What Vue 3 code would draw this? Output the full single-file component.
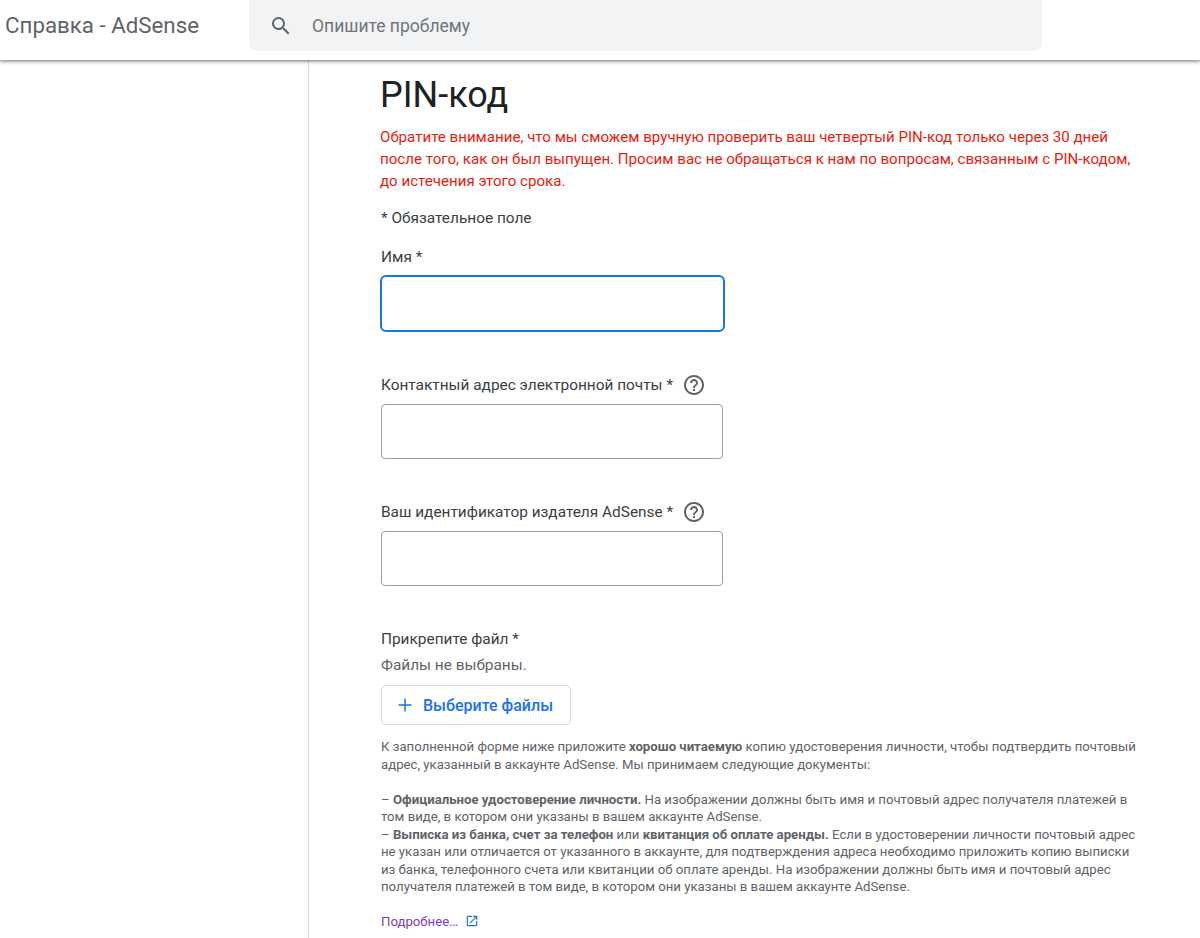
<script setup>
const fields = [
  { id: 'name', label: 'Имя *', help: false, focus: true },
  { id: 'email', label: 'Контактный адрес электронной почты *', help: true, focus: false },
  { id: 'pub', label: 'Ваш идентификатор издателя AdSense *', help: true, focus: false },
]
</script>

<template>
  <div class="page">
    <header class="topbar">
      <div class="brand">Справка - AdSense</div>
      <div class="search">
        <svg class="search-icon" viewBox="0 0 24 24" width="24" height="24"><path fill="#5f6368" d="M15.5 14h-.79l-.28-.27A6.471 6.471 0 0 0 16 9.5 6.5 6.5 0 1 0 9.5 16c1.61 0 3.09-.59 4.23-1.57l.27.28v.79l5 4.99L20.49 19l-4.99-5zm-6 0C7.01 14 5 11.99 5 9.5S7.01 5 9.5 5 14 7.01 14 9.5 11.99 14 9.5 14z"/></svg>
        <span class="search-text">Опишите проблему</span>
      </div>
    </header>
    <div class="body">
      <aside class="side"></aside>
      <main class="main">
        <h1 class="title">PIN-код</h1>
        <p class="warn">Обратите внимание, что мы сможем вручную проверить ваш четвертый PIN-код только через 30 дней после того, как он был выпущен. Просим вас не обращаться к нам по вопросам, связанным с PIN-кодом, до истечения этого срока.</p>
        <div class="required">* Обязательное поле</div>
        <div v-for="f in fields" :key="f.id" class="field" :class="{ 'field-focus': f.focus }">
          <div class="label">
            <span>{{ f.label }}</span>
            <svg v-if="f.help" class="help" viewBox="0 0 24 24" width="24" height="24"><path fill="#5f6368" d="M11 18h2v-2h-2v2zm1-16C6.48 2 2 6.48 2 12s4.48 10 10 10 10-4.48 10-10S17.52 2 12 2zm0 18c-4.41 0-8-3.59-8-8s3.59-8 8-8 8 3.59 8 8-3.59 8-8 8zm0-14c-2.21 0-4 1.79-4 4h2c0-1.1.9-2 2-2s2 .9 2 2c0 2-3 1.75-3 5h2c0-2.25 3-2.5 3-5 0-2.21-1.79-4-4-4z"/></svg>
          </div>
          <div class="input" :class="{ focus: f.focus }"></div>
        </div>
        <div class="label file-label">Прикрепите файл *</div>
        <div class="nofile">Файлы не выбраны.</div>
        <div class="btn">
          <svg viewBox="0 0 16 16" width="16" height="16"><path fill="#1a73e8" d="M7.25 1.5h1.5v5.75h5.75v1.5H8.75v5.75h-1.5V8.75H1.5v-1.5h5.75z"/></svg>
          <span>Выберите файлы</span>
        </div>
        <div class="note">
          <p>К заполненной форме ниже приложите <b>хорошо читаемую</b> копию удостоверения личности, чтобы подтвердить почтовый адрес, указанный в аккаунте AdSense. Мы принимаем следующие документы:</p>
          <p class="gap">– <b>Официальное удостоверение личности.</b> На изображении должны быть имя и почтовый адрес получателя платежей в том виде, в котором они указаны в вашем аккаунте AdSense.<br>– <b>Выписка из банка, счет за телефон</b> или <b>квитанция об оплате аренды.</b> Если в удостоверении личности почтовый адрес не указан или отличается от указанного в аккаунте, для подтверждения адреса необходимо приложить копию выписки из банка, телефонного счета или квитанции об оплате аренды. На изображении должны быть имя и почтовый адрес получателя платежей в том виде, в котором они указаны в вашем аккаунте AdSense.</p>
          <div class="more">
            <span>Подробнее…</span>
            <svg viewBox="0 0 24 24" width="14" height="14"><path fill="#1a73e8" d="M19 19H5V5h7V3H5a2 2 0 0 0-2 2v14a2 2 0 0 0 2 2h14c1.1 0 2-.9 2-2v-7h-2v7zM14 3v2h3.59l-9.83 9.83 1.41 1.41L19 6.41V10h2V3h-7z"/></svg>
          </div>
        </div>
      </main>
    </div>
  </div>
</template>

<style>
html, body { margin: 0; background: #fff; overflow: hidden; }
</style>

<style scoped>
.page { width: 1200px; height: 938px; overflow: hidden; font-family: Roboto, "Liberation Sans", sans-serif; color: #202124; position: relative; }
.topbar { height: 60px; display: flex; align-items: flex-start; background: #fff; box-shadow: 0 1px 4px rgba(0,0,0,.6); position: relative; z-index: 1; }
.brand { width: 249px; padding-left: 5px; box-sizing: border-box; font-size: 22.3px; line-height: 50px; color: #5f6368; }
.search { width: 793px; height: 51px; background: #f1f3f4; border-radius: 0 0 8px 8px; display: flex; align-items: center; box-sizing: border-box; padding-left: 20px; }
.search-text { margin-left: 19px; font-size: 17.5px; line-height: 48px; color: #70757a; }
.body { display: flex; height: 878px; }
.side { width: 308px; flex: none; border-right: 1px solid #dadce0; }
.main { padding-left: 71px; width: 770px; }
.title { margin: 11px 0 0; font-weight: 400; font-size: 36px; line-height: 48px; color: #202124; }
.warn { margin: 7px 0 0; width: 765px; color: #ea1c10; font-size: 15.1px; line-height: 22px; }
.required { margin: 15px 0 16px 1px; font-size: 15.4px; line-height: 22px; color: #3c4043; }
.field { margin-left: 1px; height: 127px; }
.field-focus { height: 128px; }
.label { display: flex; align-items: center; gap: 9px; font-size: 15.4px; line-height: 24px; color: #3c4043; }
.help { width: 24px; height: 24px; }
.input { width: 340px; height: 53px; border: 1px solid #9aa0a6; border-radius: 4px; margin-top: 7px; }
.input.focus { border: 2px solid #1a73e8; border-radius: 6px; width: 341px; height: 53px; margin-left: -1px; margin-top: 6px; }
.file-label, .nofile, .btn, .note { margin-left: 1px; }
.nofile { font-size: 15.4px; line-height: 22px; color: #5f6368; margin-top: 3px; }
.btn { margin-top: 9px; height: 38px; border: 1px solid #dadce0; border-radius: 4px; display: flex; align-items: center; gap: 10px; padding-left: 15px; width: 173px; font-size: 16px; font-weight: 500; color: #1a73e8; }
.note { margin-top: 13px; font-size: 13.2px; line-height: 17.5px; color: #5f6368; width: 765px; }
.note p { margin: 0; }
.note b { font-weight: 700; }
.gap { margin-top: 17.5px !important; }
.more { margin-top: 17px; display: flex; align-items: center; gap: 7px; color: #7b3fb5; }
</style>
